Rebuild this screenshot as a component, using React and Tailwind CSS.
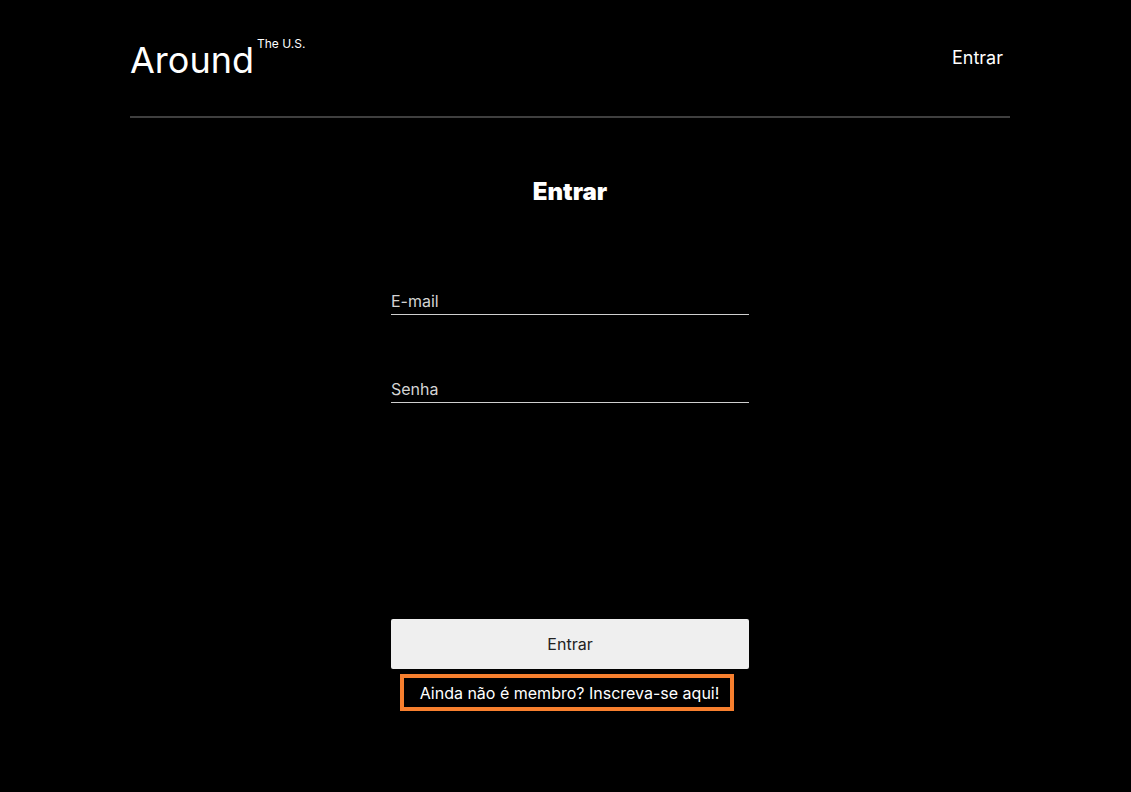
import React, { useState } from "react";

const App = () => {
  const [email, setEmail] = useState("");
  const [senha, setSenha] = useState("");

  return (
    <div className="min-h-screen bg-black text-white font-['Inter',sans-serif]">
      <div className="w-[880px] ml-[130px]">
        {/* Cabeçalho */}
        <header className="h-[118px] border-b-2 border-[#3f3f3f] flex justify-between items-start">
          <div className="flex items-start pt-[42px]">
            <h1 className="text-[36px] leading-none font-normal">Around</h1>
            <span className="text-[12px] leading-none ml-[3px] -mt-[4px]">
              The U.S.
            </span>
          </div>
          <a href="#" className="text-[18px] leading-none pt-[49px] pr-[7px]">
            Entrar
          </a>
        </header>

        {/* Formulário */}
        <main className="flex flex-col items-center">
          <h2 className="mt-[62px] text-[24px] leading-none font-black">
            Entrar
          </h2>
          <form className="w-[358px] mt-[84px] flex flex-col">
            <input
              type="email"
              value={email}
              onChange={(e) => setEmail(e.target.value)}
              placeholder="E-mail"
              className="h-[27px] bg-transparent border-b border-[#cfcfcf] text-[16px] text-[#d4d4d4] placeholder:text-[#d4d4d4] outline-none p-0"
            />
            <input
              type="password"
              value={senha}
              onChange={(e) => setSenha(e.target.value)}
              placeholder="Senha"
              className="mt-[61px] h-[27px] bg-transparent border-b border-[#cfcfcf] text-[16px] text-[#d4d4d4] placeholder:text-[#d4d4d4] outline-none p-0"
            />
            <button
              type="submit"
              className="mt-[216px] h-[50px] bg-[#efefef] rounded-[2px] text-[16px] text-[#222]"
            >
              Entrar
            </button>
            <div className="flex justify-center mt-[5px]">
              <a
                href="#"
                className="h-[37px] flex items-center border-4 border-[#f77f2e] pl-[16px] pr-[11px] text-[16px] text-white -ml-[6px]"
              >
                Ainda não é membro? Inscreva-se aqui!
              </a>
            </div>
          </form>
        </main>
      </div>
    </div>
  );
};

export default App;
